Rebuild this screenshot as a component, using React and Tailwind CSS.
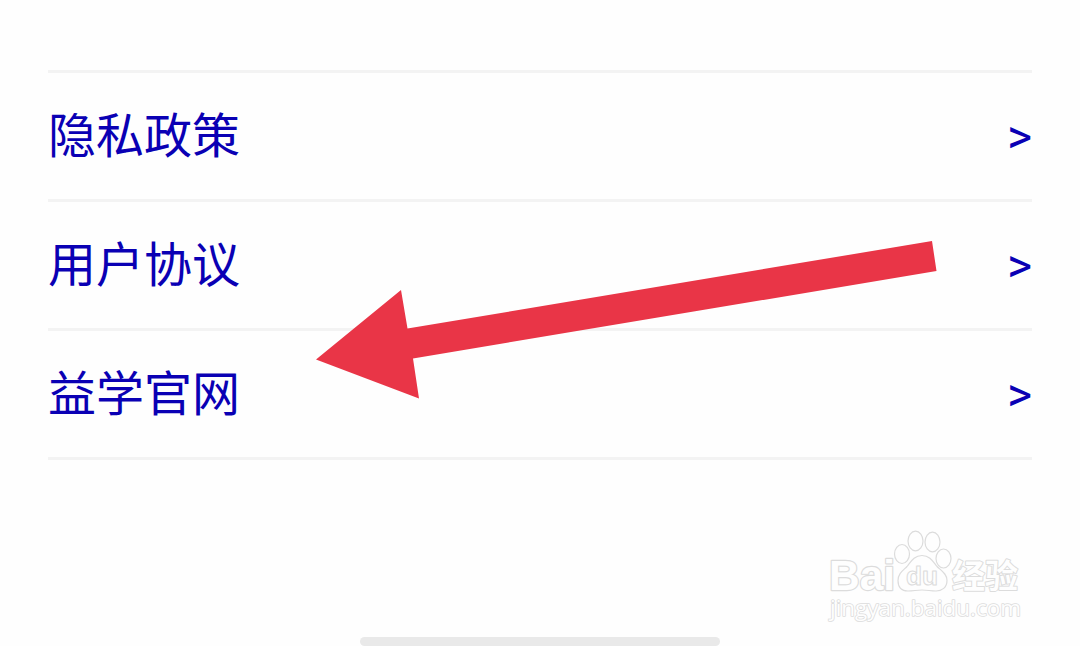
const links = [
    { label: "隐私政策" },
    { label: "用户协议" },
    { label: "益学官网" },
];

export default function App() {
    return (
        <div className="relative flex h-[646px] w-[1080px] flex-col overflow-hidden bg-[#fefefe] px-12 pt-[70px]">
            {/* Link list */}
            <nav className="border-t-[3px] border-[#f3f3f3]">
                {links.map((link) => (
                    <LinkRow key={link.label} label={link.label} />
                ))}
            </nav>

            {/* Home indicator */}
            <div className="mx-auto mt-auto h-[9px] w-[360px] shrink-0 rounded-full bg-[#e9e9e9]"></div>

            <Arrow />
            <Watermark />
        </div>
    );
}

function LinkRow({ label }) {
    return (
        <a className="flex h-[129px] items-center justify-between border-b-[3px] border-[#f3f3f3] text-[48px] leading-none text-[#0a00b4]">
            <span className="mb-2 font-['Noto_Sans_CJK_SC',sans-serif]">{label}</span>
            <span className="mt-0.5 font-[Roboto,sans-serif]">&gt;</span>
        </a>
    );
}

function Arrow() {
    return (
        <svg className="absolute left-[310px] top-[235px]" width="635" height="170" viewBox="310 235 635 170">
            <polygon points="316,359.5 401,290 407.5,328.5 932,241 936.5,271 413,358.5 419,398.5" fill="#e93547" />
        </svg>
    );
}

function Watermark() {
    return (
        <svg
            className="absolute left-[820px] top-[525px]"
            width="210"
            height="105"
            viewBox="820 525 210 105"
            fill="#fefefe"
            stroke="#dcdcdc"
            strokeWidth="1.2"
            strokeLinejoin="round"
        >
            <text x="829" y="590" fontSize="42" textLength="66" lengthAdjust="spacingAndGlyphs" strokeWidth="2.4" paintOrder="stroke" className="font-['Liberation_Sans',sans-serif] font-bold">Bai</text>
            <ellipse cx="902" cy="554" rx="7.5" ry="9.5" />
            <ellipse cx="915.5" cy="541" rx="7.5" ry="9.8" />
            <ellipse cx="932.5" cy="542" rx="7.5" ry="9.8" />
            <ellipse cx="943.5" cy="558.5" rx="7.5" ry="9.5" />
            <path d="M922 555.500c-8 0-11 6-15 11c-4 4-9 7-9 14c0 7 4 10.500 10 10.500c5 0 9-1 14-1s9 1 14 1c6 0 11-3.500 11-10.500c0-7-6-10-10-14c-4-5-7-11-15-11z" />
            <text x="906" y="585" fontSize="25" textLength="32" lengthAdjust="spacingAndGlyphs" strokeWidth="1" className="font-['Liberation_Sans',sans-serif] font-bold">du</text>
            <text x="952" y="587.500" fontSize="33" textLength="66" strokeWidth="2" paintOrder="stroke" className="font-['Noto_Sans_CJK_SC',sans-serif] font-bold">经验</text>
            <text x="830" y="616" fontSize="22" textLength="191" lengthAdjust="spacingAndGlyphs" strokeWidth="1.6" paintOrder="stroke" className="font-['Open_Sans',sans-serif]">jingyan.baidu.com</text>
        </svg>
    );
}
